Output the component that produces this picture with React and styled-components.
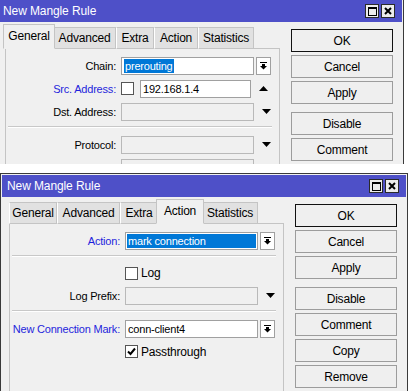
import styled, { createGlobalStyle } from 'styled-components';

const GlobalStyle = createGlobalStyle`
  html, body {
    margin: 0;
    padding: 0;
    background: #fff;
    overflow: hidden;
  }
  body {
    font-family: "Liberation Sans", Arial, sans-serif;
    font-size: 11px;
    letter-spacing: -0.2px;
    color: #000;
  }
`;

const TABS = [
  { name: 'General', w: 48 },
  { name: 'Advanced', w: 63 },
  { name: 'Extra', w: 38 },
  { name: 'Action', w: 44 },
  { name: 'Statistics', w: 56 },
];

const BUTTONS = ['OK', 'Cancel', 'Apply', 'Disable', 'Comment', 'Copy', 'Remove'];

// 아이콘들
const MaxIcon = () => (
  <svg width='9' height='9' viewBox='0 0 9 9'>
    <rect x='0.5' y='1' width='8' height='7.5' fill='none' stroke='#000' strokeWidth='1' />
    <rect x='0' y='0' width='9' height='2' fill='#000' />
  </svg>
);

const CloseIcon = () => (
  <svg width='8' height='8' viewBox='0 0 8 8'>
    <path d='M1 1 L7 7 M7 1 L1 7' stroke='#000' strokeWidth='2' />
  </svg>
);

const DropIcon = () => (
  <svg width='7' height='8' viewBox='0 0 7 8'>
    <rect x='0' y='0' width='7' height='1' fill='#000' />
    <rect x='2' y='2' width='3' height='2' fill='#000' />
    <polygon points='0,4 7,4 3.5,7.5' fill='#000' />
  </svg>
);

const TriIcon = ({ up, color = '#000' }) => (
  <svg width='9' height='5' viewBox='0 0 9 5'>
    <polygon points={up ? '0,5 9,5 4.5,0' : '0,0 9,0 4.5,5'} fill={color} />
  </svg>
);

const TickIcon = () => (
  <svg width='9' height='9' viewBox='0 0 9 9'>
    <path d='M1 4.5 L3.5 7 L8 1.5' fill='none' stroke='#000' strokeWidth='2' />
  </svg>
);

const Check = ({ checked }) => <CheckBox>{checked && <TickIcon />}</CheckBox>;

//윈도우 틀 (두 창이 같은 구조)
const MangleWindow = ({ activeTab, children }) => (
  <Frame>
    <TitleBar>
      <span>New Mangle Rule</span>
      <TitleButtons>
        <TitleBtn>
          <MaxIcon />
        </TitleBtn>
        <TitleBtn>
          <CloseIcon />
        </TitleBtn>
      </TitleButtons>
    </TitleBar>
    <Body>
      <LeftCol>
        <TabStrip>
          {TABS.map((t) => (
            <Tab key={t.name} $w={t.w} $active={t.name === activeTab}>
              {t.name}
            </Tab>
          ))}
        </TabStrip>
        <Panel>{children}</Panel>
      </LeftCol>
      <ButtonCol>
        {BUTTONS.map((b) => (
          <Btn key={b} $default={b === 'OK'} $gap={b === 'Disable'}>
            {b}
          </Btn>
        ))}
      </ButtonCol>
    </Body>
  </Frame>
);

export default function App() {
  return (
    <>
      <GlobalStyle />
      <TopClip>
        <MangleWindow activeTab='General'>
          <Row>
            <Label>Chain:</Label>
            <Controls>
              <Field>
                <Sel>prerouting</Sel>
              </Field>
              <DropBtn>
                <DropIcon />
              </DropBtn>
            </Controls>
          </Row>
          <Row>
            <Label $blue>Src. Address:</Label>
            <Controls>
              <Check />
              <Field $w={111} style={{ marginLeft: 6 }}>
                192.168.1.4
              </Field>
              <ArrowSlot>
                <TriIcon up />
              </ArrowSlot>
            </Controls>
          </Row>
          <Row>
            <Label>Dst. Address:</Label>
            <Controls>
              <Field $disabled />
              <ArrowSlot>
                <TriIcon />
              </ArrowSlot>
            </Controls>
          </Row>
          <Sep />
          <Row>
            <Label>Protocol:</Label>
            <Controls>
              <Field $disabled />
              <ArrowSlot>
                <TriIcon />
              </ArrowSlot>
            </Controls>
          </Row>
          <Row>
            <Label>Src. Port:</Label>
            <Controls>
              <Field $disabled />
              <ArrowSlot>
                <TriIcon color='#9a9a9a' />
              </ArrowSlot>
            </Controls>
          </Row>
        </MangleWindow>
      </TopClip>

      <BottomWrap>
        <MangleWindow activeTab='Action'>
          <Row>
            <Label $blue>Action:</Label>
            <Controls>
              <Field $highlight>mark connection</Field>
              <DropBtn>
                <DropIcon />
              </DropBtn>
            </Controls>
          </Row>
          <Sep />
          <Row $h={22}>
            <span />
            <Controls>
              <Check />
              <CheckText>Log</CheckText>
            </Controls>
          </Row>
          <Row>
            <Label>Log Prefix:</Label>
            <Controls>
              <Field $disabled />
              <ArrowSlot>
                <TriIcon />
              </ArrowSlot>
            </Controls>
          </Row>
          <Sep />
          <Row>
            <Label $blue>New Connection Mark:</Label>
            <Controls>
              <Field>conn-client4</Field>
              <DropBtn>
                <DropIcon />
              </DropBtn>
            </Controls>
          </Row>
          <Row>
            <span />
            <Controls>
              <Check checked />
              <CheckText>Passthrough</CheckText>
            </Controls>
          </Row>
        </MangleWindow>
      </BottomWrap>
    </>
  );
}

const TopClip = styled.div`
  height: 164px;
  overflow: hidden;
  & > div {
    margin: -2px 0 0 -4px;
  }
`;

const BottomWrap = styled.div`
  margin-top: 9px;
`;

const Frame = styled.div`
  width: 408px;
  height: 228px;
  box-sizing: border-box;
  border: 1px solid #3a3a3a;
  padding: 1px;
  background: #f0f0f0;
  display: flex;
  flex-direction: column;
`;

const TitleBar = styled.div`
  height: 22px;
  flex-shrink: 0;
  background: #4e50c8;
  color: #fff;
  display: flex;
  align-items: center;
  justify-content: space-between;
  padding: 0 7px 0 5px;
  font-size: 12px;
  letter-spacing: -0.1px;
`;

const TitleButtons = styled.div`
  display: flex;
  gap: 2px;
`;

const TitleBtn = styled.div`
  width: 14px;
  height: 14px;
  box-sizing: border-box;
  border: 1px solid #2a2a2a;
  background: #ececec;
  display: flex;
  align-items: center;
  justify-content: center;
`;

const Body = styled.div`
  flex: 1;
  display: flex;
  padding: 0 9px 0 7px;
  min-height: 0;
`;

const LeftCol = styled.div`
  width: 275px;
  display: flex;
  flex-direction: column;
`;

const TabStrip = styled.div`
  height: 27px;
  flex-shrink: 0;
  display: flex;
  align-items: flex-end;
  position: relative;
  z-index: 1;
  margin-bottom: -1px;
`;

const Tab = styled.div`
  position: relative;
  z-index: ${(p) => (p.$active ? 2 : 1)};
  width: ${(p) => (p.$active ? p.$w + 4 : p.$w)}px;
  margin: ${(p) => (p.$active ? '0 -2px' : '0')};
  height: ${(p) => (p.$active ? 25 : 22)}px;
  box-sizing: border-box;
  border: 1px solid #c4c4c4;
  border-left-color: ${(p) => (p.$active ? '#c4c4c4' : '#fff')};
  border-bottom-color: ${(p) => (p.$active ? '#f0f0f0' : '#c4c4c4')};
  background: ${(p) => (p.$active ? '#f0f0f0' : '#e1e1e1')};
  display: flex;
  align-items: center;
  justify-content: center;
  padding-bottom: ${(p) => (p.$active ? 2 : 0)}px;
  font-size: 12px;
  white-space: nowrap;
`;

const Panel = styled.div`
  flex: 1;
  border: 1px solid #c4c4c4;
  border-bottom: none;
  background: #f0f0f0;
  padding-top: 5px;
`;

const ButtonCol = styled.div`
  width: 102px;
  margin-left: 11px;
  padding-top: 7px;
  display: flex;
  flex-direction: column;
  gap: 3px;
`;

const Btn = styled.div`
  height: 23px;
  flex-shrink: 0;
  box-sizing: border-box;
  border: 1px solid ${(p) => (p.$default ? '#111' : '#9c9c9c')};
  background: #efefef;
  display: flex;
  align-items: center;
  justify-content: center;
  font-size: 12px;
  margin-top: ${(p) => (p.$gap ? 5 : 0)}px;
`;

const Row = styled.div`
  display: grid;
  grid-template-columns: 110px 1fr;
  column-gap: 5px;
  align-items: center;
  height: ${(p) => p.$h || 23}px;
`;

const Label = styled.div`
  text-align: right;
  white-space: nowrap;
  color: ${(p) => (p.$blue ? '#1f1fdc' : '#000')};
`;

const Controls = styled.div`
  display: flex;
  align-items: center;
`;

const Field = styled.div`
  width: ${(p) => p.$w || 133}px;
  height: 18px;
  box-sizing: border-box;
  border: 1px solid ${(p) => (p.$disabled ? '#b9b9b9' : '#a0a0a0')};
  background: ${(p) => (p.$highlight ? '#0078d7' : p.$disabled ? '#f0f0f0' : '#fff')};
  color: ${(p) => (p.$highlight ? '#fff' : '#000')};
  box-shadow: ${(p) => (p.$highlight ? 'inset 0 0 0 1px #fff' : 'none')};
  padding: 0 2px;
  display: flex;
  align-items: center;
  white-space: nowrap;
  overflow: hidden;
`;

const Sel = styled.span`
  background: #0078d7;
  color: #fff;
  padding: 1px 1px;
`;

const DropBtn = styled.div`
  width: 15px;
  height: 18px;
  margin-left: 2px;
  box-sizing: border-box;
  border: 1px solid #a0a0a0;
  background: #fff;
  display: flex;
  align-items: center;
  justify-content: center;
`;

const ArrowSlot = styled.div`
  width: 17px;
  display: flex;
  justify-content: flex-end;
`;

const CheckBox = styled.div`
  width: 13px;
  height: 13px;
  box-sizing: border-box;
  border: 1px solid #555;
  background: #fff;
  display: flex;
  align-items: center;
  justify-content: center;
`;

const CheckText = styled.span`
  margin-left: 3px;
  font-size: 12px;
`;

const Sep = styled.div`
  border-top: 1px solid #c8c8c8;
  border-bottom: 1px solid #fff;
  margin: 3px 7px 5px 2px;
`;
